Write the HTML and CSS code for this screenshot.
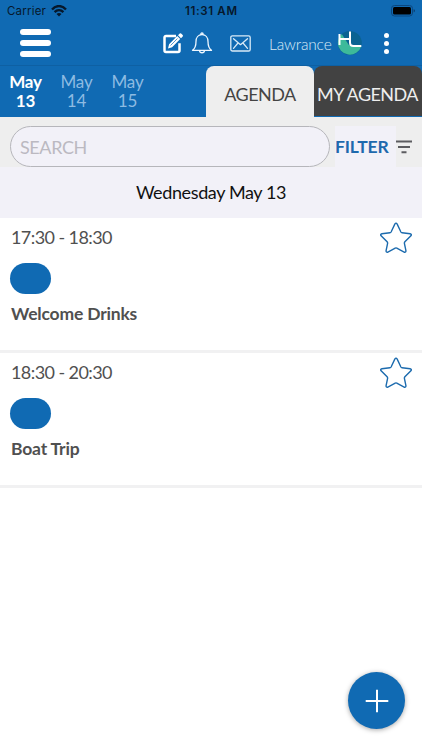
FILE: index.html
```html
<!DOCTYPE html>
<html lang="en">
<head>
<meta charset="utf-8">
<title>Agenda</title>
<link rel="stylesheet" href="styles.css">
</head>
<body>
<header class="top">
  <div class="status">
    <span class="carrier">Carrier</span>
    <svg class="wifi" width="16" height="12" viewBox="0 0 16 12" fill="none" stroke="#06182c" stroke-width="2.300"><path d="M1 4.400C5-.1 11-.1 15 4.400M3.600 7.100c2.500-2.700 6.300-2.700 8.800 0"/><path d="M8 11.500 5.500 9C6.900 7.600 9.100 7.600 10.500 9z" fill="#06182c" stroke="none"/></svg>
    <span class="clock">11:31 AM</span>
    <svg class="battery" width="24" height="12" viewBox="0 0 24 12"><rect x=".5" y=".5" width="21" height="10.500" rx="3" fill="none" stroke="#0b477f"/><rect x="2" y="2" width="18" height="7.500" rx="1.500" fill="#000"/><path d="M22.700 4v3.600q1.200-.6 1.200-1.800T22.700 4" fill="#0b3c6b"/></svg>
  </div>
  <div class="toolbar">
    <div class="menu"><i></i><i></i><i></i></div>
    <svg class="edit" width="22" height="22" viewBox="0 0 22 22"><path d="M14 4H4A1.500 1.500 0 0 0 2.500 5.500v13A1.500 1.500 0 0 0 4 20h12a1.500 1.500 0 0 0 1.500-1.500v-7.300" fill="none" stroke="#fff" stroke-width="2.500"/><path d="m6 16.500 1.100-4.300L15.200 4l3 3-8.100 8.200zM16 3.200l1.700-1.700q.7-.6 1.400 0L20.700 3q.6.700 0 1.400L19 6.200z" fill="#fff"/><path d="m8.500 13.500 7-7" stroke="#106ab3" stroke-width=".7"/></svg>
    <svg class="bell" width="22" height="22" viewBox="0 0 22 22" fill="none" stroke="#eef7ff" stroke-width="1.300" stroke-linejoin="round" stroke-linecap="round"><path d="M1.500 18.300C4.500 16.200 5 14 5 9.500 5 5.500 7.300 2.700 11 2.700s6 2.800 6 6.800c0 4.500.5 6.700 3.500 8.800zM9.800 2.500q0-1.500 1.200-1.500t1.200 1.500M8.500 18.500c.2 3 4.800 3 5 0"/></svg>
    <svg class="mail" width="21" height="17" viewBox="0 0 21 17" fill="none" stroke="#d9eaf7" stroke-width="1.300" stroke-linejoin="round" stroke-linecap="round"><rect x=".8" y=".8" width="19.400" height="15.200" rx="1.600"/><path d="m3.500 3.700 7 6 7-6M3.500 13.300 8 8M17.500 13.300 13 8"/></svg>
    <span class="user">Lawrance</span>
    <svg class="avatar" width="26" height="26" viewBox="0 0 26 26"><circle cx="12.800" cy="13" r="12" fill="#0a6392"/><path d="M.8 13c0-3.500 1.500-6.700 4-9l7 11 12.600 1.300A12.100 12.100 0 0 1 .8 13" fill="#3dba9a"/><path d="M2.500 4v11M2.500 9h10.500M13 1.500v11q0 3.500 3.500 3.500h7.800" stroke="#fff" stroke-width="2" fill="none"/></svg>
    <div class="dots"><i></i><i></i><i></i></div>
  </div>
  <nav class="tabs">
    <div class="day on">May<br>13</div>
    <div class="day">May<br>14</div>
    <div class="day">May<br>15</div>
    <div class="tab agenda"><span>AGENDA</span></div>
    <div class="tab mine"><span>MY AGENDA</span></div>
  </nav>
</header>
<div class="searchbar">
  <div class="search">SEARCH</div>
  <div class="filter">FILTER</div>
  <svg class="lines" width="16" height="14" viewBox="0 0 16 14" stroke="#5c5c60" stroke-width="2"><path d="M0 1.500h16M2 7h12M5.500 12.300h5"/></svg>
</div>
<h1 class="date">Wednesday May 13</h1>
<main>
  <article class="card">
    <div class="row"><time>17:30 - 18:30</time><svg class="star" width="32" height="31" viewBox="0 0 32 31"><path d="M14.800 2.100q1.200-2 2.400 0l3.700 7.900q.4.700 1.200.8l8 1q2 .4.800 2l-6 6q-.6.700-.5 1.500l1.500 7.400q.1 2-1.800 1.400l-7.300-4q-.8-.4-1.600 0l-7.300 4q-1.900.6-1.800-1.400l1.500-7.400q.1-.8-.5-1.500l-6-6q-1.200-1.600.8-2l8-1q.8-.1 1.200-.8z"/></svg></div>
    <div class="pill"></div>
    <h2>Welcome Drinks</h2>
  </article>
  <article class="card">
    <div class="row"><time>18:30 - 20:30</time><svg class="star" width="32" height="31" viewBox="0 0 32 31"><path d="M14.800 2.100q1.200-2 2.400 0l3.700 7.900q.4.700 1.200.8l8 1q2 .4.800 2l-6 6q-.6.700-.5 1.500l1.500 7.400q.1 2-1.800 1.400l-7.300-4q-.8-.4-1.600 0l-7.300 4q-1.900.6-1.800-1.400l1.500-7.400q.1-.8-.5-1.500l-6-6q-1.200-1.600.8-2l8-1q.8-.1 1.200-.8z"/></svg></div>
    <div class="pill"></div>
    <h2>Boat Trip</h2>
  </article>
</main>
<div class="fab"><svg width="24" height="24" viewBox="0 0 24 24" stroke="#fff" stroke-width="2"><path d="M12 .7v22.600M.7 12h22.600"/></svg></div>
</body>
</html>
```
FILE: styles.css
```css
* { box-sizing: border-box; }
body {
  margin: 0;
  height: 750px;
  overflow: hidden;
  background: #fff;
  color: #505050;
  font-family: Lato, sans-serif;
}
.top { background: #106ab3; }
.status {
  display: flex;
  height: 22px;
  padding-left: 7px;
  font: 11.5px/22px Inter, sans-serif;
  color: #06182c;
}
.carrier { width: 39px; white-space: nowrap; letter-spacing: .2px; }
.wifi { margin: 5px 0 0 5px; }
.clock {
  width: 60px;
  margin-left: 118px;
  font-weight: 600;
  letter-spacing: .65px;
  white-space: nowrap;
}
.battery { margin: 5px 0 0 146px; }
.toolbar {
  display: flex;
  align-items: center;
  height: 43px;
  padding: 0 0 1px 20px;
}
.menu { display: flex; flex-direction: column; gap: 5px; width: 31px; }
.menu i { height: 6px; border-radius: 3px; background: #fff; }
.edit { margin-left: 111px; }
.bell { margin-left: 7px; }
.mail { margin-left: 17px; }
.user {
  width: 64px;
  margin-left: 18px;
  padding-top: 2px;
  font-size: 15.5px;
  font-weight: 300;
  letter-spacing: -.15px;
  color: #d9eaf7;
  white-space: nowrap;
}
.avatar { margin-left: 4px; }
.dots { display: flex; flex-direction: column; gap: 3px; margin-left: 20.5px; }
.dots i { width: 5px; height: 5px; border-radius: 50%; background: #fff; }
.tabs {
  display: flex;
  height: 52px;
  border-top: 1px solid #0e60a3;
}
.day {
  width: 51px;
  padding-top: 6px;
  font-size: 17px;
  line-height: 19px;
  letter-spacing: -.15px;
  text-align: center;
  color: #8dbbe2;
}
.day.on { font-weight: 700; color: #fff; }
.tab {
  display: flex;
  justify-content: center;
  padding-top: 17px;
  border-radius: 8px 8px 0 0;
  font-size: 18px;
  line-height: 22px;
  letter-spacing: -.55px;
  white-space: nowrap;
}
.agenda { width: 108px; margin-left: 53px; background: #eee; color: #444; }
.mine { width: 108px; height: 50px; background: #424242; color: #eee; }
.mine span { margin-left: -1px; }
.searchbar {
  display: flex;
  height: 50px;
  padding: 9px 0 0 10px;
  background: #eee;
}
.search {
  width: 320px;
  height: 41px;
  padding-left: 9px;
  border: 1px solid #b6b6bb;
  border-radius: 21px;
  background: #f2f1f8;
  font-size: 18px;
  line-height: 40px;
  letter-spacing: -.4px;
  color: #bbb9c1;
}
.filter {
  width: 61px;
  margin-left: 5px;
  background: #f2f1f8;
  font-size: 17.5px;
  font-weight: 700;
  line-height: 42px;
  letter-spacing: -.15px;
  color: #1e69ad;
}
.lines { margin-top: 14px; }
.date {
  height: 51px;
  margin: 0;
  background: #f2f1f8;
  font-size: 18px;
  font-weight: 400;
  line-height: 51px;
  letter-spacing: -.38px;
  text-align: center;
  color: #111;
}
.card {
  height: 135px;
  padding: 5px 10px 0 11px;
  border-bottom: 3px solid #f1f1f2;
}
.row { display: flex; justify-content: space-between; height: 39.5px; }
time { font-size: 18px; line-height: 29px; letter-spacing: -.58px; }
.star { margin-top: -1px; fill: none; stroke: #1c6bae; stroke-width: 1.4; }
.pill {
  width: 41px;
  height: 31px;
  margin-left: -.6px;
  border-radius: 16px;
  background: #106ab3;
}
h2 {
  margin: 9.5px 0 0;
  font-size: 17.5px;
  line-height: 22px;
  letter-spacing: -.18px;
}
.fab {
  position: absolute;
  left: 348px;
  top: 672px;
  display: flex;
  align-items: center;
  justify-content: center;
  width: 57px;
  height: 57px;
  border-radius: 50%;
  background: #106ab3;
  box-shadow: 0 1px 5px rgba(0, 0, 0, .35);
}
```
